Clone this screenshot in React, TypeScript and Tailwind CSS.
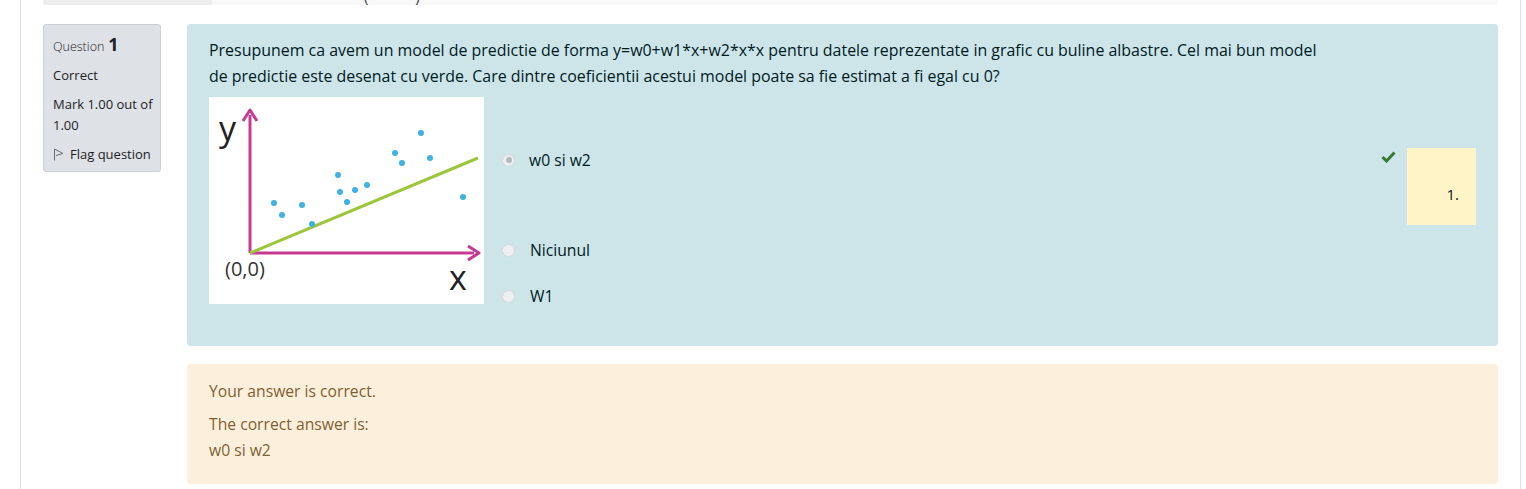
import React from 'react';

const dots: [number, number][] = [
  [65, 106], [73, 118], [93, 108], [103, 127], [129, 78], [131, 95], [138, 105],
  [146, 93], [158, 88], [186, 56], [193, 66], [212, 36], [221, 61], [254, 100],
];

function Chart() {
  return (
    <svg width="275" height="207" viewBox="0 0 275 207" className="block bg-white shrink-0">
      <line x1="41" y1="156" x2="41" y2="18" stroke="#c63a93" strokeWidth="3" />
      <path d="M34 24 L41 13 L48 24" fill="none" stroke="#c63a93" strokeWidth="3" strokeLinejoin="round" />
      <line x1="41" y1="156" x2="265" y2="156" stroke="#c63a93" strokeWidth="3" />
      <path d="M259 149 L270 156 L259 163" fill="none" stroke="#c63a93" strokeWidth="3" strokeLinejoin="round" />
      <line x1="41" y1="156" x2="269" y2="61" stroke="#9cc63b" strokeWidth="3" />
      {dots.map(([x, y], i) => (
        <circle key={i} cx={x} cy={y} r="3" fill="#3fb1e3" />
      ))}
      <text x="10" y="44" fontSize="34" fill="#222" fontFamily="Open Sans, sans-serif">y</text>
      <text x="16" y="179" fontSize="20" fill="#333" fontFamily="Open Sans, sans-serif">(0,0)</text>
      <text x="240" y="193" fontSize="34" fill="#222" fontFamily="Open Sans, sans-serif">x</text>
    </svg>
  );
}

function Radio({ checked }: { checked?: boolean }) {
  return (
    <span className="flex h-[13px] w-[13px] shrink-0 items-center justify-center rounded-full border border-[#d5d8dc] bg-[#eceef0]">
      {checked && <span className="h-[6px] w-[6px] rounded-full bg-[#b5b8bb]" />}
    </span>
  );
}

function FlagIcon() {
  return (
    <svg width="11" height="13" viewBox="0 0 11 13" className="shrink-0">
      <path d="M1.5 12.5 V1 L10 5.5 L3 7.5" fill="none" stroke="#6b6f73" strokeWidth="1" strokeLinejoin="round" />
    </svg>
  );
}

export default function App() {
  return (
    <div className="h-[489px] w-[1526px] overflow-hidden bg-white font-['Open_Sans',sans-serif] text-[#001a1e]">
      <div className="ml-[20px] mr-[5px] h-full border-x border-[#dee2e6] px-[22px]">
        <div className="flex h-[5px] overflow-hidden">
          <div className="w-[169px] bg-[#eeeeee]" />
          <div className="flex-1 bg-[#f8f8f8] overflow-hidden">
            <span className="-mt-[13px] ml-[152px] block whitespace-pre text-[15px] leading-[18px] text-[#444]">(            )</span>
          </div>
        </div>

        <div className="mt-[19px] flex gap-[26px]">
          <div className="h-[148px] w-[118px] shrink-0 rounded-[3px] border border-[#cad0d6] bg-[#dee2e6] pl-[9px] pr-[6px] pt-[1px] text-[13px] leading-[21px] text-[#1d2125]">
            <div className="mt-[8px] flex items-baseline gap-[4px]">
              <span className="text-[12.5px] font-light">Question</span>
              <span className="text-[18px] font-bold leading-[21px]">1</span>
            </div>
            <div className="mt-[8px]">Correct</div>
            <div className="mt-[8px]">Mark 1.00 out of 1.00</div>
            <div className="mt-[8px] flex items-center gap-[6px]">
              <FlagIcon />
              <span>Flag question</span>
            </div>
          </div>

          <div className="flex-1">
            <div className="h-[322px] rounded-[4px] bg-[#cde5e9] px-[22px] pt-[13px]">
              <p className="text-[15.95px] leading-[26px]">
                Presupunem ca avem un model de predictie de forma y=w0+w1*x+w2*x*x pentru datele reprezentate in grafic cu buline albastre. Cel mai bun model
                <br />
                de predictie este desenat cu verde. Care dintre coeficientii acestui model poate sa fie estimat a fi egal cu 0?
              </p>
              <div className="mt-[8px] flex">
                <Chart />
                <div className="flex flex-1 flex-col pl-[18px] pt-[51px] text-[15.7px] leading-[22px]">
                  <div className="flex items-start">
                    <div className="mt-[1px] flex items-center gap-[14px]">
                      <Radio checked />
                      <span>w0 si w2</span>
                    </div>
                    <svg width="15" height="12" viewBox="0 0 15 12" className="ml-auto mt-[3px]">
                      <path d="M1.5 6 L5.5 10 L13.5 1.5" fill="none" stroke="#357a32" strokeWidth="3" />
                    </svg>
                    <div className="ml-[11px] flex h-[77px] w-[69px] items-start justify-end bg-[#fff4c8] pr-[17px] pt-[35px] text-[15px]">
                      1.
                    </div>
                  </div>
                  <div className="mt-[14px] flex items-center gap-[15px]">
                    <Radio />
                    <span>Niciunul</span>
                  </div>
                  <div className="mt-[24px] flex items-center gap-[15px]">
                    <Radio />
                    <span>W1</span>
                  </div>
                </div>
              </div>
            </div>

            <div className="mt-[18px] h-[120px] rounded-[4px] bg-[#fcefdc] px-[22px] pt-[14px] text-[15.7px] leading-[26px] text-[#7f5f32]">
              <p className="mb-[7px]">Your answer is correct.</p>
              <p>The correct answer is:</p>
              <p>w0 si w2</p>
            </div>
          </div>
        </div>
      </div>
    </div>
  );
}
